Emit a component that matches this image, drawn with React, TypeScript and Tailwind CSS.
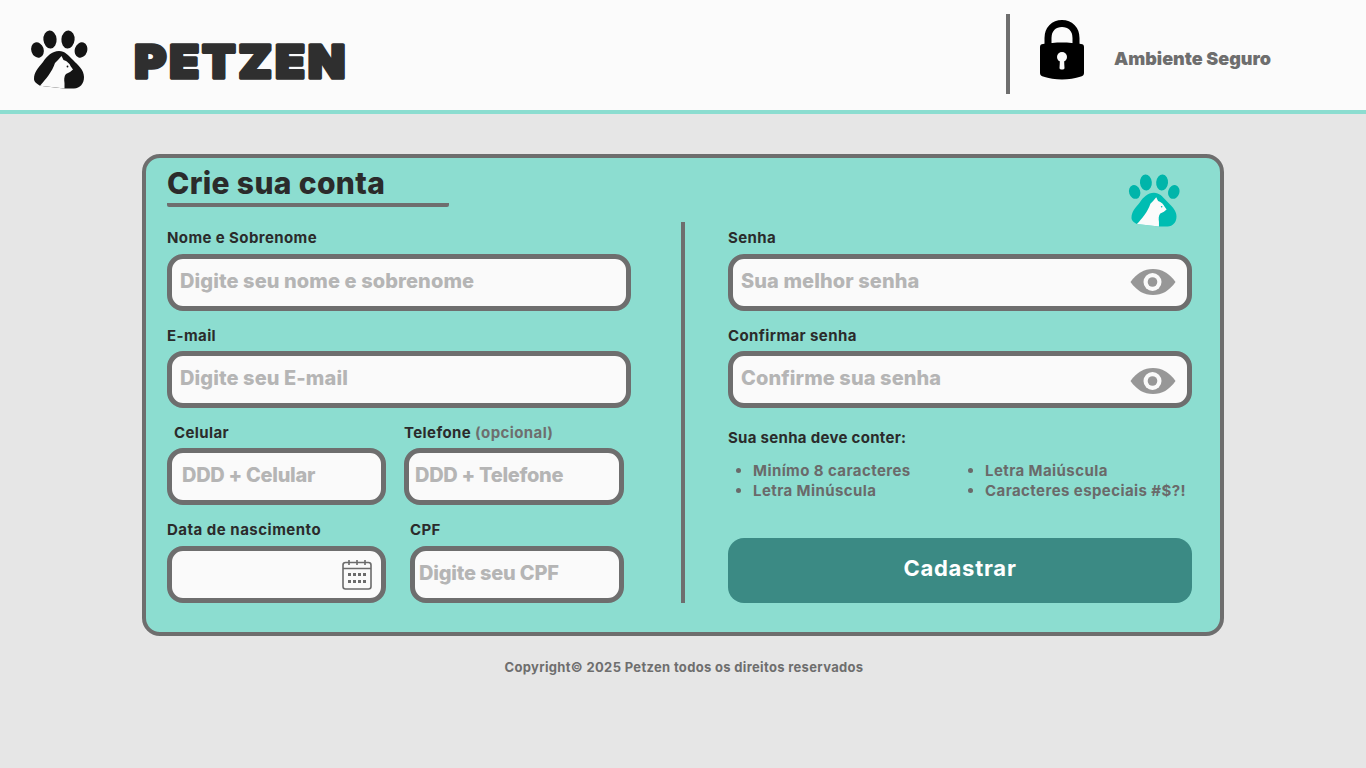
import { CSSProperties, ReactNode } from 'react'

const font: CSSProperties = { fontFamily: 'Inter, "Liberation Sans", sans-serif' }

function PawLogo({ className, pad, toes, eye }: { className: string; pad: string; toes: string; eye: string }) {
  return (
    <svg viewBox="29 29 60 61" className={className}>
      <ellipse cx="37.500" cy="50" rx="6.200" ry="7.800" transform="rotate(-18 37.500 50)" fill={toes} />
      <ellipse cx="50" cy="39.500" rx="6.600" ry="9" transform="rotate(-5 50 39.500)" fill={toes} />
      <ellipse cx="68" cy="39.500" rx="6.600" ry="9" transform="rotate(5 68 39.500)" fill={toes} />
      <ellipse cx="81" cy="50" rx="6.200" ry="7.800" transform="rotate(18 81 50)" fill={toes} />
      <path d="M59 51C52 51 47 56 43 62C38 68 34 72 34 79C34 82 37 84 40 85.700L64 88.500L74 88.500C80 88 84 84 84 77C84 70 78 65 73 60C68 55 65 51 59 51Z" fill={pad} />
      <path d="M40 85.700C46 79 52 72 55 63L58 60L61.500 56L63.500 60C67 61 70 64 70.500 66L73 69.500L70 72L66 74C64 76 64 80 64.500 83L64.500 88.500Z" fill="#fbfbfb" />
      <circle cx="67.500" cy="66.500" r="0.900" fill={eye} />
    </svg>
  )
}

function Eye({ className = '' }: { className?: string }) {
  return (
    <svg viewBox="0 0 46 28" className={`w-[46px] h-[28px] shrink-0 ${className}`}>
      <path d="M0.500 14C7 5 14 1 23 1C32 1 39 5 45.500 14C39 23 32 27 23 27C14 27 7 23 0.500 14Z" fill="#979797" />
      <circle cx="22.500" cy="14" r="9" fill="#fafafa" />
      <circle cx="22.500" cy="14" r="4.800" fill="#979797" />
    </svg>
  )
}

function Calendar() {
  return (
    <svg viewBox="0 0 30 31" fill="none" stroke="#6b6b6b" className="w-[30px] h-[31px] shrink-0">
      <rect x="1" y="3.500" width="28" height="26.500" rx="2.500" strokeWidth="1.600" />
      <path d="M1 9.500H29M7 1V6M15 1V6M23 1V6" strokeWidth="1.600" />
      <g fill="#6b6b6b" stroke="none">
        {[6, 11, 16, 21].map((x) => (
          <g key={x}>
            <rect x={x} y="14" width="3" height="3" />
            <rect x={x} y="21" width="3" height="3" />
          </g>
        ))}
      </g>
    </svg>
  )
}

function Field({
  label,
  placeholder,
  className = '',
  labelClass = '',
  textClass = 'pl-[8px] tracking-[0.1px]',
  boxClass = 'pr-[11px]',
  icon,
}: {
  label: ReactNode
  placeholder?: string
  className?: string
  labelClass?: string
  textClass?: string
  boxClass?: string
  icon?: ReactNode
}) {
  return (
    <div className={`flex flex-col gap-[5px] ${className}`}>
      <label className={`h-[22px] text-[15px] leading-[22px] font-bold tracking-[0.4px] text-[#2b2b2b] whitespace-nowrap ${labelClass}`}>
        {label}
      </label>
      <div className={`h-[57px] flex items-center border-[5px] border-[#6e6e6e] rounded-[16px] bg-[#fafafa] ${boxClass}`}>
        <input
          placeholder={placeholder}
          className={`min-w-0 flex-1 pb-[3px] bg-transparent outline-none text-[20px] font-extrabold placeholder:text-[#b5b5b5] ${textClass}`}
          style={font}
        />
        {icon}
      </div>
    </div>
  )
}

export default function App() {
  return (
    <div className="min-h-screen flex flex-col bg-[#e6e6e6]" style={font}>
      {/* Header */}
      <header className="h-[114px] shrink-0 flex items-center bg-[#fbfbfb] border-b-4 border-[#8cddd0]">
        <PawLogo className="ml-[29px] mt-[9px] w-[60px] h-[61px]" pad="#141414" toes="#141414" eye="#141414" />
        <svg width="232" height="56" viewBox="0 0 232 56" className="ml-[40px] mt-[13px]">
          <text
            x="5.500"
            y="44"
            textLength="214"
            lengthAdjust="spacingAndGlyphs"
            letterSpacing="3"
            fontSize="45"
            fontWeight="900"
            fontFamily="Inter, sans-serif"
            fill="#2f2f2f"
            stroke="#2f2f2f"
            strokeWidth="3.500"
            strokeLinejoin="round"
          >
            PETZEN
          </text>
        </svg>
        <div className="ml-auto mr-[95px] -mt-[2px] flex items-center">
          <div className="w-1 h-[80px] bg-[#6e6e6e]" />
          <svg viewBox="0 0 44 60" className="ml-[30px] -mt-[8px] w-[44px] h-[60px]">
            <path d="M8 27V18C8 9 14 3.500 22 3.500C30 3.500 36 9 36 18V27" fill="none" stroke="#000" strokeWidth="7" />
            <path d="M0 27C0 25 1 24 3 24C15 22 29 22 41 24C43 24 44 25 44 27V53C44 55 43 56 41 56.500C29 60.500 15 60.500 3 56.500C1 56 0 55 0 53Z" fill="#000" />
            <circle cx="22" cy="37" r="5" fill="#fbfbfb" />
            <path d="M20 39H24L24.500 48C24.500 50 19.500 50 19.500 48Z" fill="#fbfbfb" />
          </svg>
          <span className="ml-[30px] mt-[9px] text-[18px] font-black text-[#6e6e6e] tracking-[0px] whitespace-nowrap">
            Ambiente Seguro
          </span>
        </div>
      </header>

      {/* Card */}
      <main className="relative mt-[40px] mx-auto w-[1082px] h-[482px] shrink-0 bg-[#8cddd0] border-4 border-[#6e6e6e] rounded-[18px] pl-[21px]">
        <PawLogo className="absolute right-[39px] top-[15px] w-[54px] h-[55px]" pad="#00bdb2" toes="#00b5aa" eye="#00bdb2" />

        <div className="w-[282px] h-[49px] border-b-4 border-[#6e6e6e] rounded-b-[2px]">
          <h1 className="text-[30px] leading-[50px] font-extrabold text-[#2b2b2b] whitespace-nowrap tracking-[0.35px]">Crie sua conta</h1>
        </div>

        <div className="mt-[15px] flex h-[381px]">
          {/* Left */}
          <div className="w-[464px] pt-[5px] flex flex-col gap-[13px]">
            <Field label="Nome e Sobrenome" placeholder="Digite seu nome e sobrenome" />
            <Field label="E-mail" labelClass="translate-y-[1px]" placeholder="Digite seu E-mail" />
            <div className="flex">
              <Field
                label="Celular"
                labelClass="pl-[7px] translate-y-[1px]"
                textClass="pl-[10px] -tracking-[0.3px]"
                placeholder="DDD + Celular"
                className="w-[219px]"
              />
              <Field
                label={
                  <>
                    Telefone <span className="text-[#6e6e6e]">(opcional)</span>
                  </>
                }
                labelClass="translate-y-[1px]"
                textClass="pl-[6px] -tracking-[0.3px]"
                placeholder="DDD + Telefone"
                className="ml-[18px] w-[220px]"
              />
            </div>
            <div className="flex mt-[1px]">
              <Field label="Data de nascimento" labelClass="tracking-[0.5px]" boxClass="pr-[9px]" className="w-[219px]" icon={<Calendar />} />
              <Field
                label="CPF"
                textClass="pl-[4px] -tracking-[0.2px]"
                placeholder="Digite seu CPF"
                className="ml-[24px] w-[214px]"
              />
            </div>
          </div>

          <div className="ml-[50px] w-1 bg-[#6e6e6e]" />

          {/* Right */}
          <div className="ml-[43px] w-[464px] pt-[5px] flex flex-col">
            <div className="flex flex-col gap-[13px]">
              <Field label="Senha" placeholder="Sua melhor senha" icon={<Eye className="-mt-[1px]" />} />
              <Field label="Confirmar senha" labelClass="translate-y-[1px]" placeholder="Confirme sua senha" icon={<Eye className="mt-[3px]" />} />
            </div>
            <p className="mt-[19px] text-[15px] leading-[22px] font-bold tracking-[0.3px] text-[#2b2b2b]">Sua senha deve conter:</p>
            <div className="mt-[12px] flex text-[15px] leading-[20px] font-bold tracking-[0.42px] text-[#6a6a6a]">
              <ul className="w-[232px] pl-[25px] list-disc">
                <li>Minímo 8 caracteres</li>
                <li>Letra Minúscula</li>
              </ul>
              <ul className="pl-[25px] list-disc">
                <li>Letra Maiúscula</li>
                <li>Caracteres especiais #$?!</li>
              </ul>
            </div>
            <button className="mt-auto h-[65px] pb-[5px] rounded-[16px] bg-[#3b8a84] text-white text-[22px] font-bold tracking-[0.75px]">
              Cadastrar
            </button>
          </div>
        </div>
      </main>

      <footer className="mt-[22px] pl-[2px] text-center text-[13px] font-bold tracking-[0.33px] text-[#6e6e6e]">
        Copyright© 2025 Petzen todos os direitos reservados
      </footer>
    </div>
  )
}
